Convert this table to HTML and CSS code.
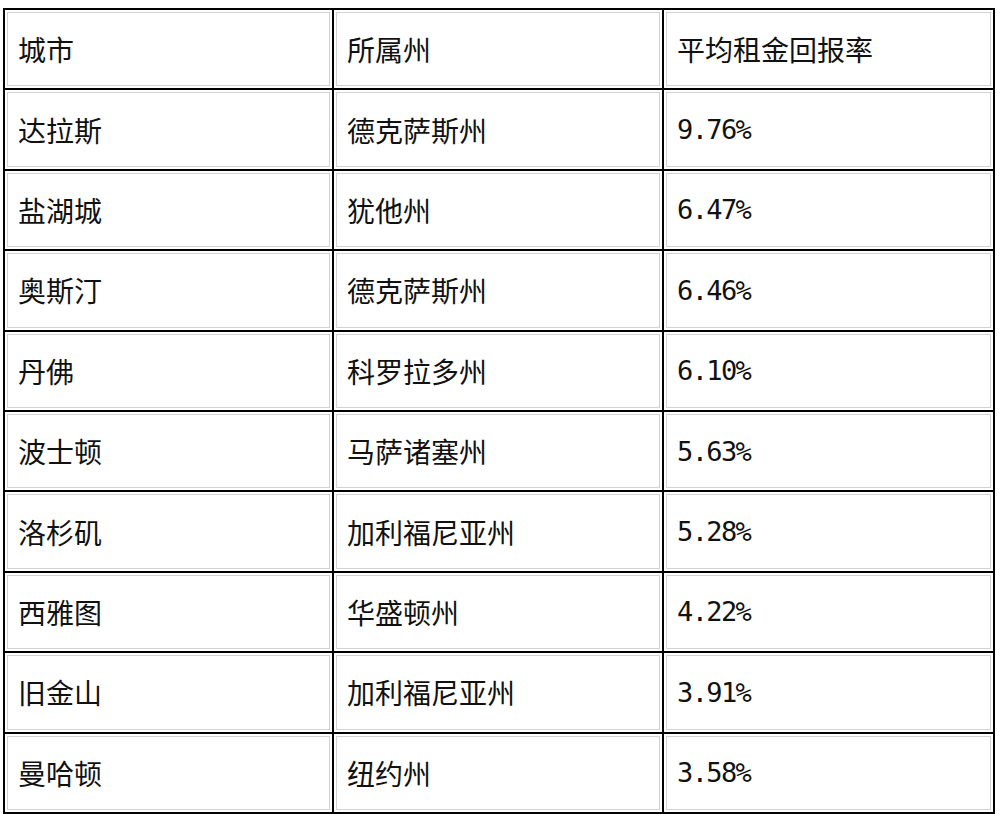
FILE: index.html
```html
<!DOCTYPE html>
<html lang="zh-CN">
<head>
<meta charset="utf-8">
<title>平均租金回报率</title>
<link rel="stylesheet" href="styles.css">
</head>
<body>
<div class="page">
<table class="rent">
  <colgroup><col class="c1"><col class="c2"><col class="c3"></colgroup>
  <tr><td>城市</td><td>所属州</td><td>平均租金回报率</td></tr>
  <tr><td>达拉斯</td><td>德克萨斯州</td><td class="num">9.76%</td></tr>
  <tr><td>盐湖城</td><td>犹他州</td><td class="num">6.47%</td></tr>
  <tr><td>奥斯汀</td><td>德克萨斯州</td><td class="num">6.46%</td></tr>
  <tr><td>丹佛</td><td>科罗拉多州</td><td class="num">6.10%</td></tr>
  <tr><td>波士顿</td><td>马萨诸塞州</td><td class="num">5.63%</td></tr>
  <tr><td>洛杉矶</td><td>加利福尼亚州</td><td class="num">5.28%</td></tr>
  <tr><td>西雅图</td><td>华盛顿州</td><td class="num">4.22%</td></tr>
  <tr><td>旧金山</td><td>加利福尼亚州</td><td class="num">3.91%</td></tr>
  <tr><td>曼哈顿</td><td>纽约州</td><td class="num">3.58%</td></tr>
</table>
</div>
</body>
</html>
```

FILE: styles.css
```css
html, body {
  margin: 0;
  padding: 0;
  background: #fff;
}

.page {
  padding: 8px 0 0 3px;
}

.rent {
  border-collapse: separate;
  border-spacing: 0;
  table-layout: fixed;
  width: 992px;
  border-top: 2px solid #000;
  border-left: 2px solid #000;
  font-family: "Noto Sans CJK SC", "Noto Sans", sans-serif;
  font-size: 28px;
  color: #111;
}

.c1 { width: 329px; }
.c2 { width: 330px; }
.c3 { width: 331px; }

.rent tr {
  height: 80.4px;
}

.rent td {
  box-sizing: border-box;
  border-right: 2px solid #000;
  border-bottom: 2px solid #000;
  padding: 0 0 0 13px;
  vertical-align: middle;
  line-height: 1;
  white-space: nowrap;
  box-shadow: inset 0 0 0 2px #fff, inset 0 0 0 3px #d2d2d2;
}

.rent td.num {
  font-family: "DejaVu Sans Mono", "Liberation Mono", monospace;
  font-size: 27px;
  letter-spacing: -1.6px;
  padding-left: 13px;
}
```
